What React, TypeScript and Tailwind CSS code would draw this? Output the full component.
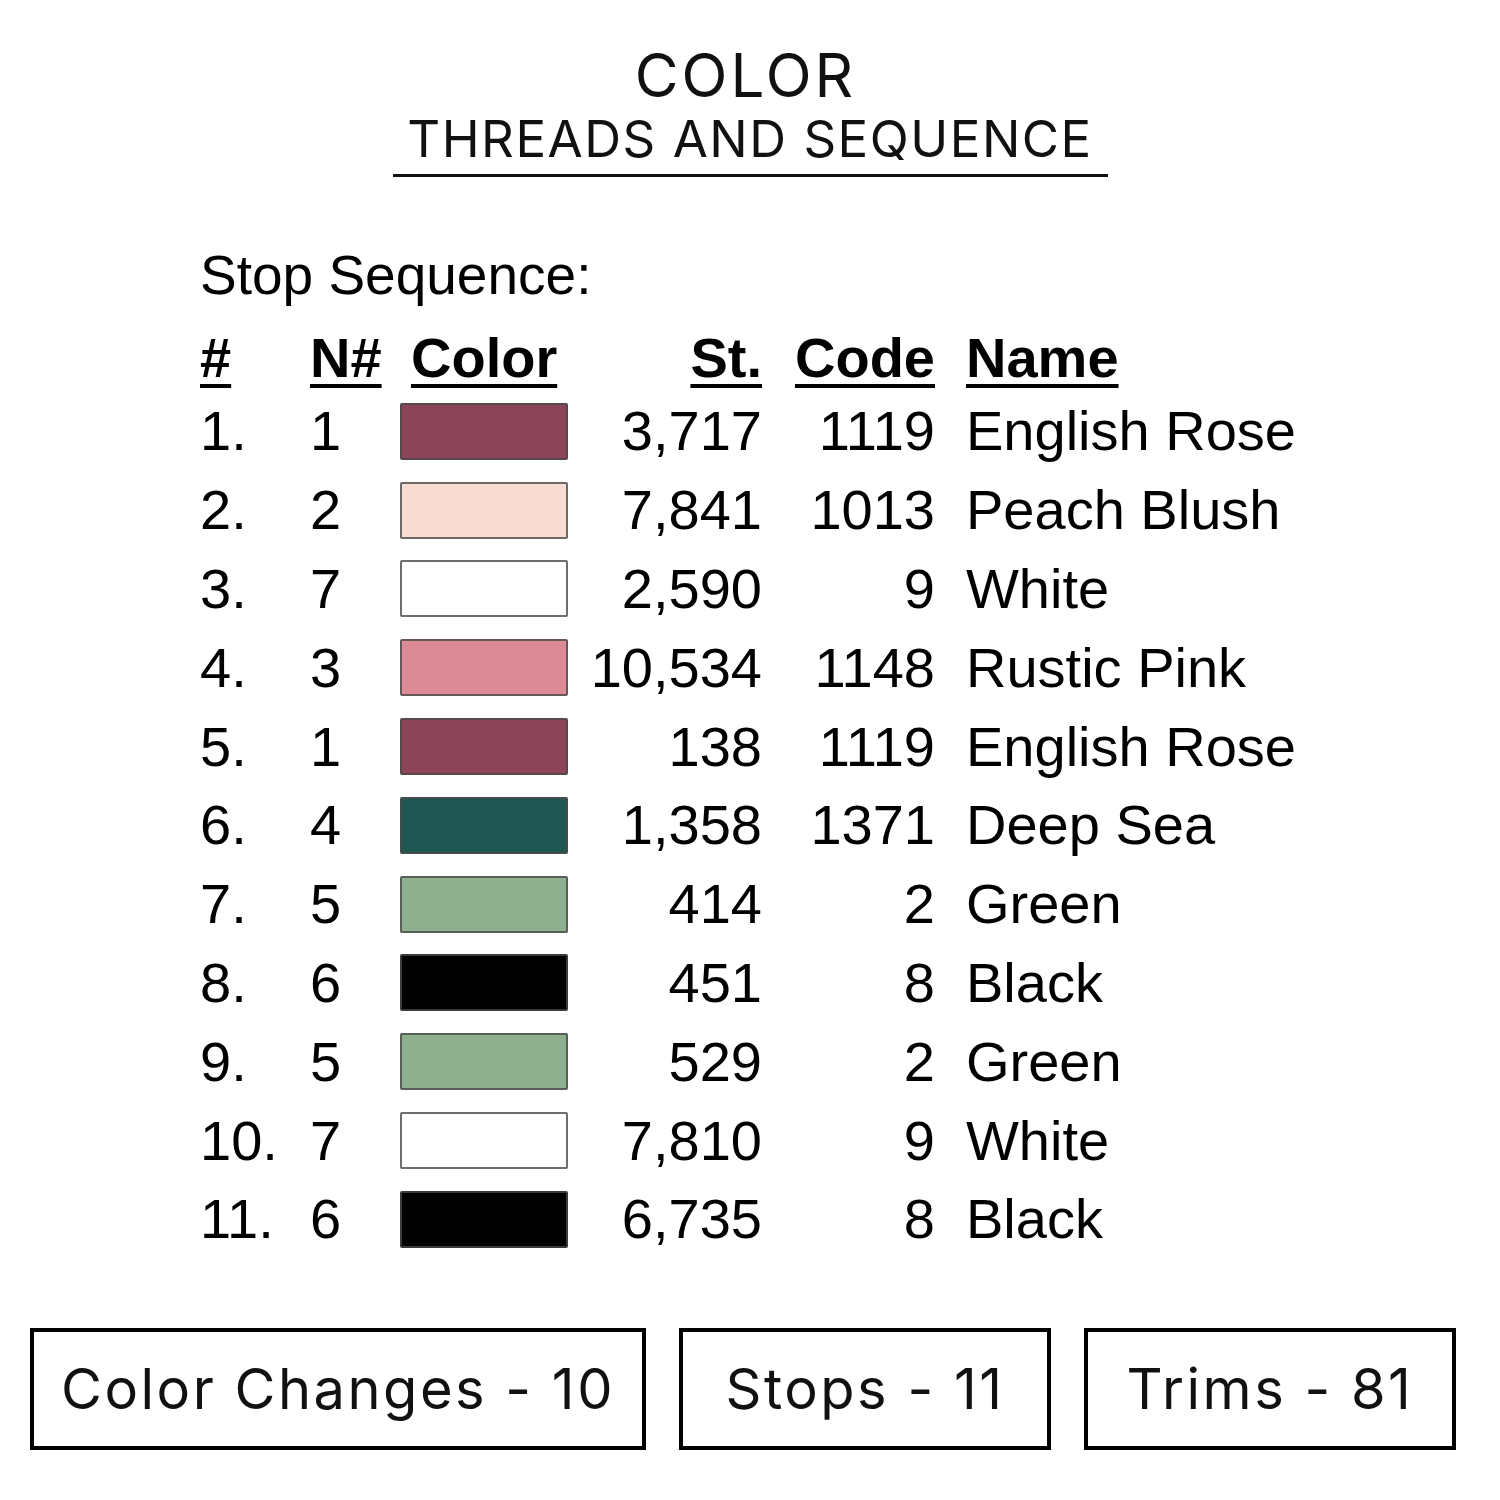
const rows = [
  { n: "1.", needle: "1", color: "#8c4458", st: "3,717", code: "1119", name: "English Rose" },
  { n: "2.", needle: "2", color: "#f8dbd3", st: "7,841", code: "1013", name: "Peach Blush" },
  { n: "3.", needle: "7", color: "#ffffff", st: "2,590", code: "9", name: "White" },
  { n: "4.", needle: "3", color: "#dc8a96", st: "10,534", code: "1148", name: "Rustic Pink" },
  { n: "5.", needle: "1", color: "#8c4458", st: "138", code: "1119", name: "English Rose" },
  { n: "6.", needle: "4", color: "#1e5751", st: "1,358", code: "1371", name: "Deep Sea" },
  { n: "7.", needle: "5", color: "#8fb08f", st: "414", code: "2", name: "Green" },
  { n: "8.", needle: "6", color: "#000000", st: "451", code: "8", name: "Black" },
  { n: "9.", needle: "5", color: "#8fb08f", st: "529", code: "2", name: "Green" },
  { n: "10.", needle: "7", color: "#ffffff", st: "7,810", code: "9", name: "White" },
  { n: "11.", needle: "6", color: "#000000", st: "6,735", code: "8", name: "Black" },
];

const cols = "grid grid-cols-[110px_90px_168px_194px_173px_auto] items-center";

export default function App() {
  return (
    <div className="w-[1500px] h-[1500px] bg-white text-black overflow-hidden">
      {/* title */}
      <div className="flex flex-col items-center pt-[45px] font-['Inter',sans-serif] text-[#111]">
        <div className="pr-[9px] text-[60px] leading-[60px] font-normal tracking-[3px]">COLOR</div>
        <div className="mt-[8px] text-[51px] leading-[51px] font-normal tracking-[1.5px]">
          THREADS AND SEQUENCE
        </div>
        <div className="mt-[10px] h-[3px] w-[715px] bg-[#111]" />
      </div>

      {/* table */}
      <div className="pl-[200px] font-['Liberation_Sans',Arial,sans-serif]">
        <div className="mt-[72px] text-[55px] leading-[53px]">Stop Sequence:</div>
        <div className={`${cols} mt-[22px] h-[68px] text-[56px] font-bold leading-none`}>
          <span className="underline decoration-[4px] underline-offset-[7px] justify-self-start">#</span>
          <span className="underline decoration-[4px] underline-offset-[7px] justify-self-start">N#</span>
          <span className="pl-[11px] justify-self-start">
            <span className="underline decoration-[4px] underline-offset-[7px]">Color</span>
          </span>
          <span className="underline decoration-[4px] underline-offset-[7px] justify-self-end">St.</span>
          <span className="underline decoration-[4px] underline-offset-[7px] justify-self-end">Code</span>
          <span className="pl-[31px]">
            <span className="underline decoration-[4px] underline-offset-[7px]">Name</span>
          </span>
        </div>
        {rows.map((r, i) => (
          <div key={i} className={`${cols} h-[78.8px] text-[56px] leading-none`}>
            <span>{r.n}</span>
            <span>{r.needle}</span>
            <span
              className="h-[57px] w-[168px] rounded-[2px] border-2 border-[#4a4a4a]/80"
              style={{ backgroundColor: r.color }}
            />
            <span className="justify-self-end">{r.st}</span>
            <span className="justify-self-end">{r.code}</span>
            <span className="pl-[31px]">{r.name}</span>
          </div>
        ))}
      </div>

      {/* totals */}
      <div className="mt-[69px] flex gap-[33px] pl-[30px] font-['Inter',sans-serif] text-[56px] tracking-[2.5px] text-[#111]">
        <div className="flex h-[122px] w-[616px] items-center justify-center border-4 border-black">
          Color Changes - 10
        </div>
        <div className="flex h-[122px] w-[372px] items-center justify-center border-4 border-black">
          Stops - 11
        </div>
        <div className="flex h-[122px] w-[372px] items-center justify-center border-4 border-black">
          Trims - 81
        </div>
      </div>
    </div>
  );
}
